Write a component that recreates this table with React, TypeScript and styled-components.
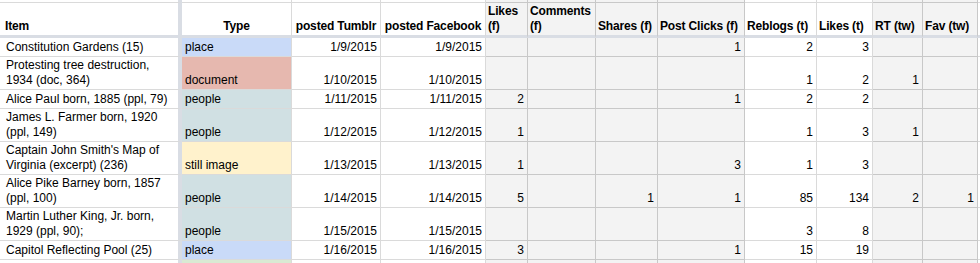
import React from 'react';
import styled, { createGlobalStyle } from 'styled-components';

const GlobalStyle = createGlobalStyle`
  html, body {
    margin: 0;
    padding: 0;
    background: #fff;
    overflow: hidden;
  }
  body {
    font-family: 'Liberation Sans', Arial, sans-serif;
    color: #000;
  }
`;

const gridLine = '#dadada';
const darkLine = '#c8c8c8';
const frozen = '#d9dde4';
const shade = '#f3f3f3';

const typeColors: Record<string, string> = {
    place: '#c9daf8',
    document: '#e6b8af',
    people: '#d0e0e3',
    'still image': '#fff2cc',
    map: '#d9ead3',
};

type Align = 'left' | 'center' | 'right';
type Column = { title: string; width: number; shaded?: boolean; headAlign?: Align; align?: Align };

// widths include the right border; '\n' marks where the header wraps
const columns: Column[] = [
    { title: '', width: 3 },
    { title: 'Item', width: 179, align: 'left' },
    { title: 'Type', width: 110, headAlign: 'center', align: 'left' },
    { title: 'posted Tumblr', width: 89, headAlign: 'center' },
    { title: 'posted Facebook', width: 105, headAlign: 'center' },
    { title: 'Likes\n(f)', width: 42, shaded: true },
    { title: 'Comments\n(f)', width: 68, shaded: true },
    { title: 'Shares (f)', width: 62, shaded: true },
    { title: 'Post Clicks (f)', width: 87, shaded: true },
    { title: 'Reblogs (t)', width: 72 },
    { title: 'Likes (t)', width: 56 },
    { title: 'RT (tw)', width: 50, shaded: true },
    { title: 'Fav (tw)', width: 55, shaded: true },
    { title: '', width: 120 },
];

type Post = { item: string; type: string; date: string; stats: (number | '')[]; tall?: boolean };

const posts: Post[] = [
    { item: 'Constitution Gardens (15)', type: 'place', date: '1/9/2015', stats: ['', '', '', 1, 2, 3, '', ''] },
    { item: 'Protesting tree destruction, 1934 (doc, 364)', type: 'document', date: '1/10/2015', stats: ['', '', '', '', 1, 2, 1, ''], tall: true },
    { item: 'Alice Paul born, 1885 (ppl, 79)', type: 'people', date: '1/11/2015', stats: [2, '', '', 1, 2, 2, '', ''] },
    { item: 'James L. Farmer born, 1920 (ppl, 149)', type: 'people', date: '1/12/2015', stats: [1, '', '', '', 1, 3, 1, ''], tall: true },
    { item: "Captain John Smith's Map of Virginia (excerpt) (236)", type: 'still image', date: '1/13/2015', stats: [1, '', '', 3, 1, 3, '', ''], tall: true },
    { item: 'Alice Pike Barney born, 1857 (ppl, 100)', type: 'people', date: '1/14/2015', stats: [5, '', 1, 1, 85, 134, 2, 1], tall: true },
    { item: 'Martin Luther King, Jr. born, 1929 (ppl, 90);', type: 'people', date: '1/15/2015', stats: ['', '', '', '', 3, 8, '', ''], tall: true },
    { item: 'Capitol Reflecting Pool (25)', type: 'place', date: '1/16/2015', stats: [3, '', '', 1, 15, 19, '', ''] },
];

const fillFor = (c: Column) => (c.shaded ? shade : '#fff');

export default function App() {
    return (
        <>
            <GlobalStyle />
            <Sheet>
                <Row $height={3}>
                    {columns.map((c, i) => (
                        <Cell key={i} $fill={fillFor(c)} $dark={c.shaded} $divider={i === 1} />
                    ))}
                </Row>
                <Row $height={35}>
                    {columns.map((c, i) => (
                        <HeadCell key={i} $fill={fillFor(c)} $dark={c.shaded} $divider={i === 1} $frozen $align={c.headAlign ?? 'left'}>
                            {c.title}
                        </HeadCell>
                    ))}
                </Row>
                {posts.map((p, r) => {
                    const values: (string | number)[] = ['', p.item, p.type, p.date, p.date, ...p.stats, ''];
                    return (
                        <Row key={r} $height={p.tall ? 33 : 19}>
                            {columns.map((c, i) => (
                                <Cell
                                    key={i}
                                    $fill={i === 2 ? typeColors[p.type] : fillFor(c)}
                                    $dark={c.shaded}
                                    $divider={i === 1}
                                    $align={c.align ?? 'right'}
                                    $wrap={i === 1}
                                >
                                    {values[i]}
                                </Cell>
                            ))}
                        </Row>
                    );
                })}
                <Row $height={30}>
                    {columns.map((c, i) => (
                        <Cell key={i} $fill={i === 2 ? typeColors.map : fillFor(c)} $dark={c.shaded} $divider={i === 1} />
                    ))}
                </Row>
            </Sheet>
        </>
    );
}

const Sheet = styled.div`
    display: flex;
    flex-direction: column;
    width: max-content;
    font-size: 12px;
    line-height: 15px;
`
const Row = styled.div<{ $height: number }>`
    display: grid;
    grid-template-columns: ${columns.map(c => c.width + 'px').join(' ')};
    height: ${p => p.$height}px;
`
const Cell = styled.div<{ $fill: string; $dark?: boolean; $divider?: boolean; $frozen?: boolean; $align?: Align; $wrap?: boolean }>`
    box-sizing: border-box;
    display: flex;
    flex-direction: column;
    justify-content: flex-end;
    overflow: hidden;
    padding: 0 3px 1px;
    background: ${p => p.$fill};
    text-align: ${p => p.$align ?? 'left'};
    white-space: ${p => (p.$wrap ? 'normal' : 'nowrap')};
    border-right: ${p => (p.$divider ? `4px solid ${frozen}` : `1px solid ${p.$dark ? darkLine : gridLine}`)};
    border-bottom: ${p => (p.$frozen ? `3px solid ${frozen}` : `1px solid ${p.$dark ? darkLine : gridLine}`)};
`
const HeadCell = styled(Cell)`
    font-weight: 700;
    white-space: pre;
    letter-spacing: -0.15px;
    padding-left: 2px;
    padding-right: 2px;
`
